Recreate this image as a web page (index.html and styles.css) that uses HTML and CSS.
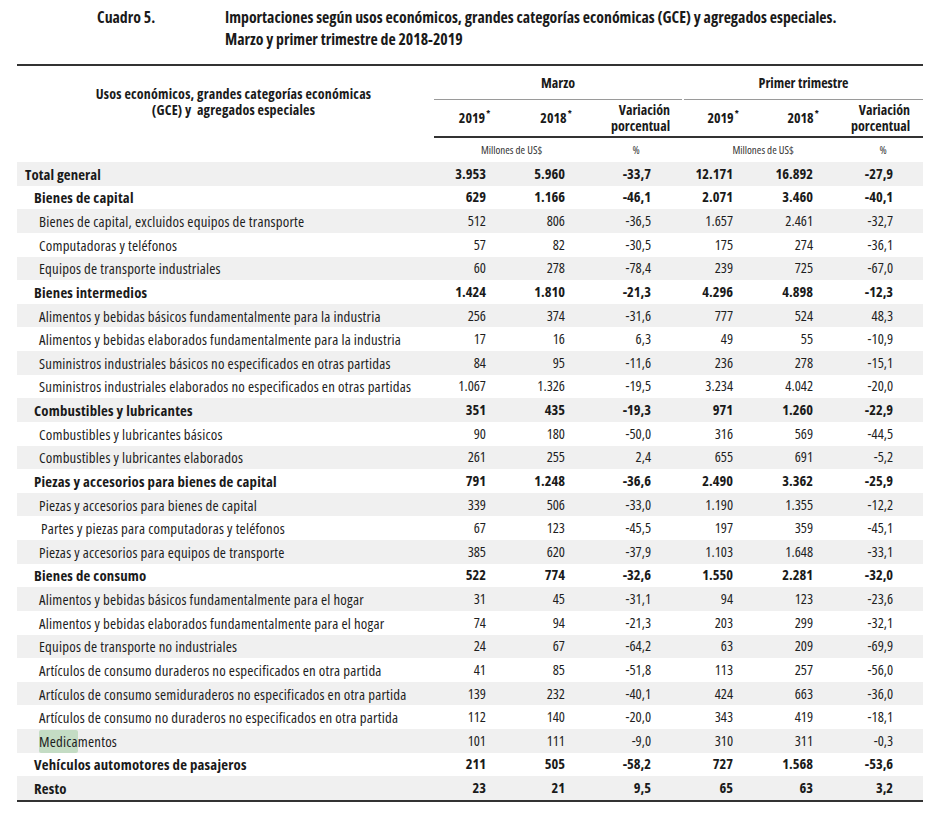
FILE: index.html
```html
<!DOCTYPE html>
<html lang="es">
<head>
<meta charset="utf-8">
<title>Cuadro 5</title>
<link rel="stylesheet" href="styles.css">
</head>
<body>
<div class="page">
  <div class="title">
    <div class="title-num">Cuadro 5.</div>
    <div class="title-text">Importaciones según usos económicos, grandes categorías económicas (GCE) y agregados especiales.<br>Marzo y primer trimestre de 2018-2019</div>
  </div>
  <table class="data">
    <colgroup>
      <col class="c-label"><col class="c-m1"><col class="c-m2"><col class="c-m3"><col class="c-t1"><col class="c-t2"><col class="c-t3">
    </colgroup>
    <thead>
      <tr class="h-group">
        <th rowspan="2" class="h-label"><div class="h-label-in">Usos económicos, grandes categorías económicas<br>(GCE) y&nbsp; agregados especiales</div></th>
        <th colspan="3" class="grp"><div class="grp-in grp-left">Marzo</div></th>
        <th colspan="3" class="grp"><div class="grp-in grp-right">Primer trimestre</div></th>
      </tr>
      <tr class="h-cols">
        <th>2019<sup>*</sup></th>
        <th>2018<sup>*</sup></th>
        <th class="var">Variación<br>porcentual</th>
        <th>2019<sup>*</sup></th>
        <th>2018<sup>*</sup></th>
        <th class="var">Variación<br>porcentual</th>
      </tr>
    </thead>
    <tbody>
      <tr class="units">
        <td></td>
        <td colspan="2" class="u-m">Millones de US$</td>
        <td class="u-p">%</td>
        <td colspan="2" class="u-t">Millones de US$</td>
        <td class="u-p2">%</td>
      </tr>
      <tr class="r0"><td class="lab">Total general</td><td>3.953</td><td>5.960</td><td>-33,7</td><td>12.171</td><td>16.892</td><td>-27,9</td></tr>
      <tr class="r1"><td class="lab">Bienes de capital</td><td>629</td><td>1.166</td><td>-46,1</td><td>2.071</td><td>3.460</td><td>-40,1</td></tr>
      <tr class="r2"><td class="lab">Bienes de capital, excluidos equipos de transporte</td><td>512</td><td>806</td><td>-36,5</td><td>1.657</td><td>2.461</td><td>-32,7</td></tr>
      <tr class="r2"><td class="lab">Computadoras y teléfonos</td><td>57</td><td>82</td><td>-30,5</td><td>175</td><td>274</td><td>-36,1</td></tr>
      <tr class="r2"><td class="lab">Equipos de transporte industriales</td><td>60</td><td>278</td><td>-78,4</td><td>239</td><td>725</td><td>-67,0</td></tr>
      <tr class="r1"><td class="lab">Bienes intermedios</td><td>1.424</td><td>1.810</td><td>-21,3</td><td>4.296</td><td>4.898</td><td>-12,3</td></tr>
      <tr class="r2"><td class="lab">Alimentos y bebidas básicos fundamentalmente para la industria</td><td>256</td><td>374</td><td>-31,6</td><td>777</td><td>524</td><td>48,3</td></tr>
      <tr class="r2"><td class="lab">Alimentos y bebidas elaborados fundamentalmente para la industria</td><td>17</td><td>16</td><td>6,3</td><td>49</td><td>55</td><td>-10,9</td></tr>
      <tr class="r2"><td class="lab">Suministros industriales básicos no especificados en otras partidas</td><td>84</td><td>95</td><td>-11,6</td><td>236</td><td>278</td><td>-15,1</td></tr>
      <tr class="r2"><td class="lab">Suministros industriales elaborados no especificados en otras partidas</td><td>1.067</td><td>1.326</td><td>-19,5</td><td>3.234</td><td>4.042</td><td>-20,0</td></tr>
      <tr class="r1"><td class="lab">Combustibles y lubricantes</td><td>351</td><td>435</td><td>-19,3</td><td>971</td><td>1.260</td><td>-22,9</td></tr>
      <tr class="r2"><td class="lab">Combustibles y lubricantes básicos</td><td>90</td><td>180</td><td>-50,0</td><td>316</td><td>569</td><td>-44,5</td></tr>
      <tr class="r2"><td class="lab">Combustibles y lubricantes elaborados</td><td>261</td><td>255</td><td>2,4</td><td>655</td><td>691</td><td>-5,2</td></tr>
      <tr class="r1"><td class="lab">Piezas y accesorios para bienes de capital</td><td>791</td><td>1.248</td><td>-36,6</td><td>2.490</td><td>3.362</td><td>-25,9</td></tr>
      <tr class="r2"><td class="lab">Piezas y accesorios para bienes de capital</td><td>339</td><td>506</td><td>-33,0</td><td>1.190</td><td>1.355</td><td>-12,2</td></tr>
      <tr class="r2"><td class="lab lab-x">Partes y piezas para computadoras y teléfonos</td><td>67</td><td>123</td><td>-45,5</td><td>197</td><td>359</td><td>-45,1</td></tr>
      <tr class="r2"><td class="lab">Piezas y accesorios para equipos de transporte</td><td>385</td><td>620</td><td>-37,9</td><td>1.103</td><td>1.648</td><td>-33,1</td></tr>
      <tr class="r1"><td class="lab">Bienes de consumo</td><td>522</td><td>774</td><td>-32,6</td><td>1.550</td><td>2.281</td><td>-32,0</td></tr>
      <tr class="r2"><td class="lab">Alimentos y bebidas básicos fundamentalmente para el hogar</td><td>31</td><td>45</td><td>-31,1</td><td>94</td><td>123</td><td>-23,6</td></tr>
      <tr class="r2"><td class="lab">Alimentos y bebidas elaborados fundamentalmente para el hogar</td><td>74</td><td>94</td><td>-21,3</td><td>203</td><td>299</td><td>-32,1</td></tr>
      <tr class="r2"><td class="lab">Equipos de transporte no industriales</td><td>24</td><td>67</td><td>-64,2</td><td>63</td><td>209</td><td>-69,9</td></tr>
      <tr class="r2"><td class="lab">Artículos de consumo duraderos no especificados en otra partida</td><td>41</td><td>85</td><td>-51,8</td><td>113</td><td>257</td><td>-56,0</td></tr>
      <tr class="r2"><td class="lab">Artículos de consumo semiduraderos no especificados en otra partida</td><td>139</td><td>232</td><td>-40,1</td><td>424</td><td>663</td><td>-36,0</td></tr>
      <tr class="r2"><td class="lab">Artículos de consumo no duraderos no especificados en otra partida</td><td>112</td><td>140</td><td>-20,0</td><td>343</td><td>419</td><td>-18,1</td></tr>
      <tr class="r2"><td class="lab"><span class="hl">Medica</span>mentos</td><td>101</td><td>111</td><td>-9,0</td><td>310</td><td>311</td><td>-0,3</td></tr>
      <tr class="r1"><td class="lab">Vehículos automotores de pasajeros</td><td>211</td><td>505</td><td>-58,2</td><td>727</td><td>1.568</td><td>-53,6</td></tr>
      <tr class="r1 last"><td class="lab">Resto</td><td>23</td><td>21</td><td>9,5</td><td>65</td><td>63</td><td>3,2</td></tr>
    </tbody>
  </table>
</div>
</body>
</html>
```

FILE: styles.css
```css
html, body {
  margin: 0;
  padding: 0;
  background: #ffffff;
}

body {
  font-family: "Open Sans", "Roboto", sans-serif;
  font-stretch: 75%;
  color: #1e1e1e;
}

.page {
  padding: 6px 0 0 17px;
  width: 906px;
}

.title {
  display: flex;
  font-weight: bold;
  font-size: 15.8px;
  line-height: 22px;
  color: #1a1a1a;
  height: 58px;
  white-space: nowrap;
}

.title-num {
  width: 128px;
  padding-left: 80px;
}

.data {
  border-collapse: collapse;
  width: 906px;
  table-layout: fixed;
  font-size: 14.4px;
  border-top: 2px solid #333;
  border-bottom: 2px solid #333;
}

.c-label { width: 417px; }
.c-m1 { width: 81px; }
.c-m2 { width: 82px; }
.c-m3 { width: 86px; }
.c-t1 { width: 80px; }
.c-t2 { width: 80px; }
.c-t3 { width: 80px; }

thead th {
  font-weight: bold;
  padding: 0;
  color: #1a1a1a;
}

.h-group th.grp {
  height: 34px;
  vertical-align: middle;
  padding: 0;
}

.grp-in {
  height: 33px;
  line-height: 33px;
  border-bottom: 1px solid #9a9a9a;
  font-size: 14px;
}

.grp-left { margin-right: 1px; }
.grp-right { margin-left: 1px; }

.h-label {
  font-size: 14px;
  letter-spacing: 0.2px;
  line-height: 16px;
  vertical-align: middle;
  text-align: center;
}

.h-label-in {
  padding-left: 16px;
}

.h-cols th {
  height: 36px;
  font-size: 14px;
  line-height: 16px;
  vertical-align: middle;
  border-bottom: 2px solid #333;
  text-align: center;
}

.h-cols th sup {
  font-size: 9px;
  vertical-align: 6px;
  line-height: 0;
  margin-left: 1px;
}

.h-cols th.var {
  text-align: right;
  padding-right: 13px;
}

tbody td {
  padding: 0;
  height: 23.63px;
  line-height: 18px;
  text-align: right;
  vertical-align: middle;
  white-space: nowrap;
}

tbody td:nth-child(2) { padding-right: 29px; }
tbody td:nth-child(3) { padding-right: 32px; }
tbody td:nth-child(4) { padding-right: 32px; }
tbody td:nth-child(5) { padding-right: 30px; }
tbody td:nth-child(6) { padding-right: 30px; }
tbody td:nth-child(7) { padding-right: 30px; }

tr.units td {
  height: 24px;
  font-size: 11px;
  color: #333;
  text-align: center;
  padding: 0;
}

tr.units td.u-m { padding-right: 8px; }
tr.units td.u-p { padding-right: 8px; }
tr.units td.u-t { padding-right: 0; }
tr.units td.u-p2 { padding-left: 0; }

tbody td.lab {
  text-align: left;
  padding-left: 22px;
  font-size: 14.8px;
  letter-spacing: 0.2px;
}

tr.r0, tr.r1 { font-weight: bold; color: #1a1a1a; }
tr.r0 td.lab { padding-left: 8px; letter-spacing: 0.1px; }
tr.r1 td.lab { padding-left: 17px; }
td.lab-x { padding-left: 24px !important; }

tbody tr:nth-child(even) td {
  background: #f0f0f0;
}

.hl {
  background: #c4dcc4;
  border-radius: 2px;
  padding: 1px 0 2px 0;
}
```
